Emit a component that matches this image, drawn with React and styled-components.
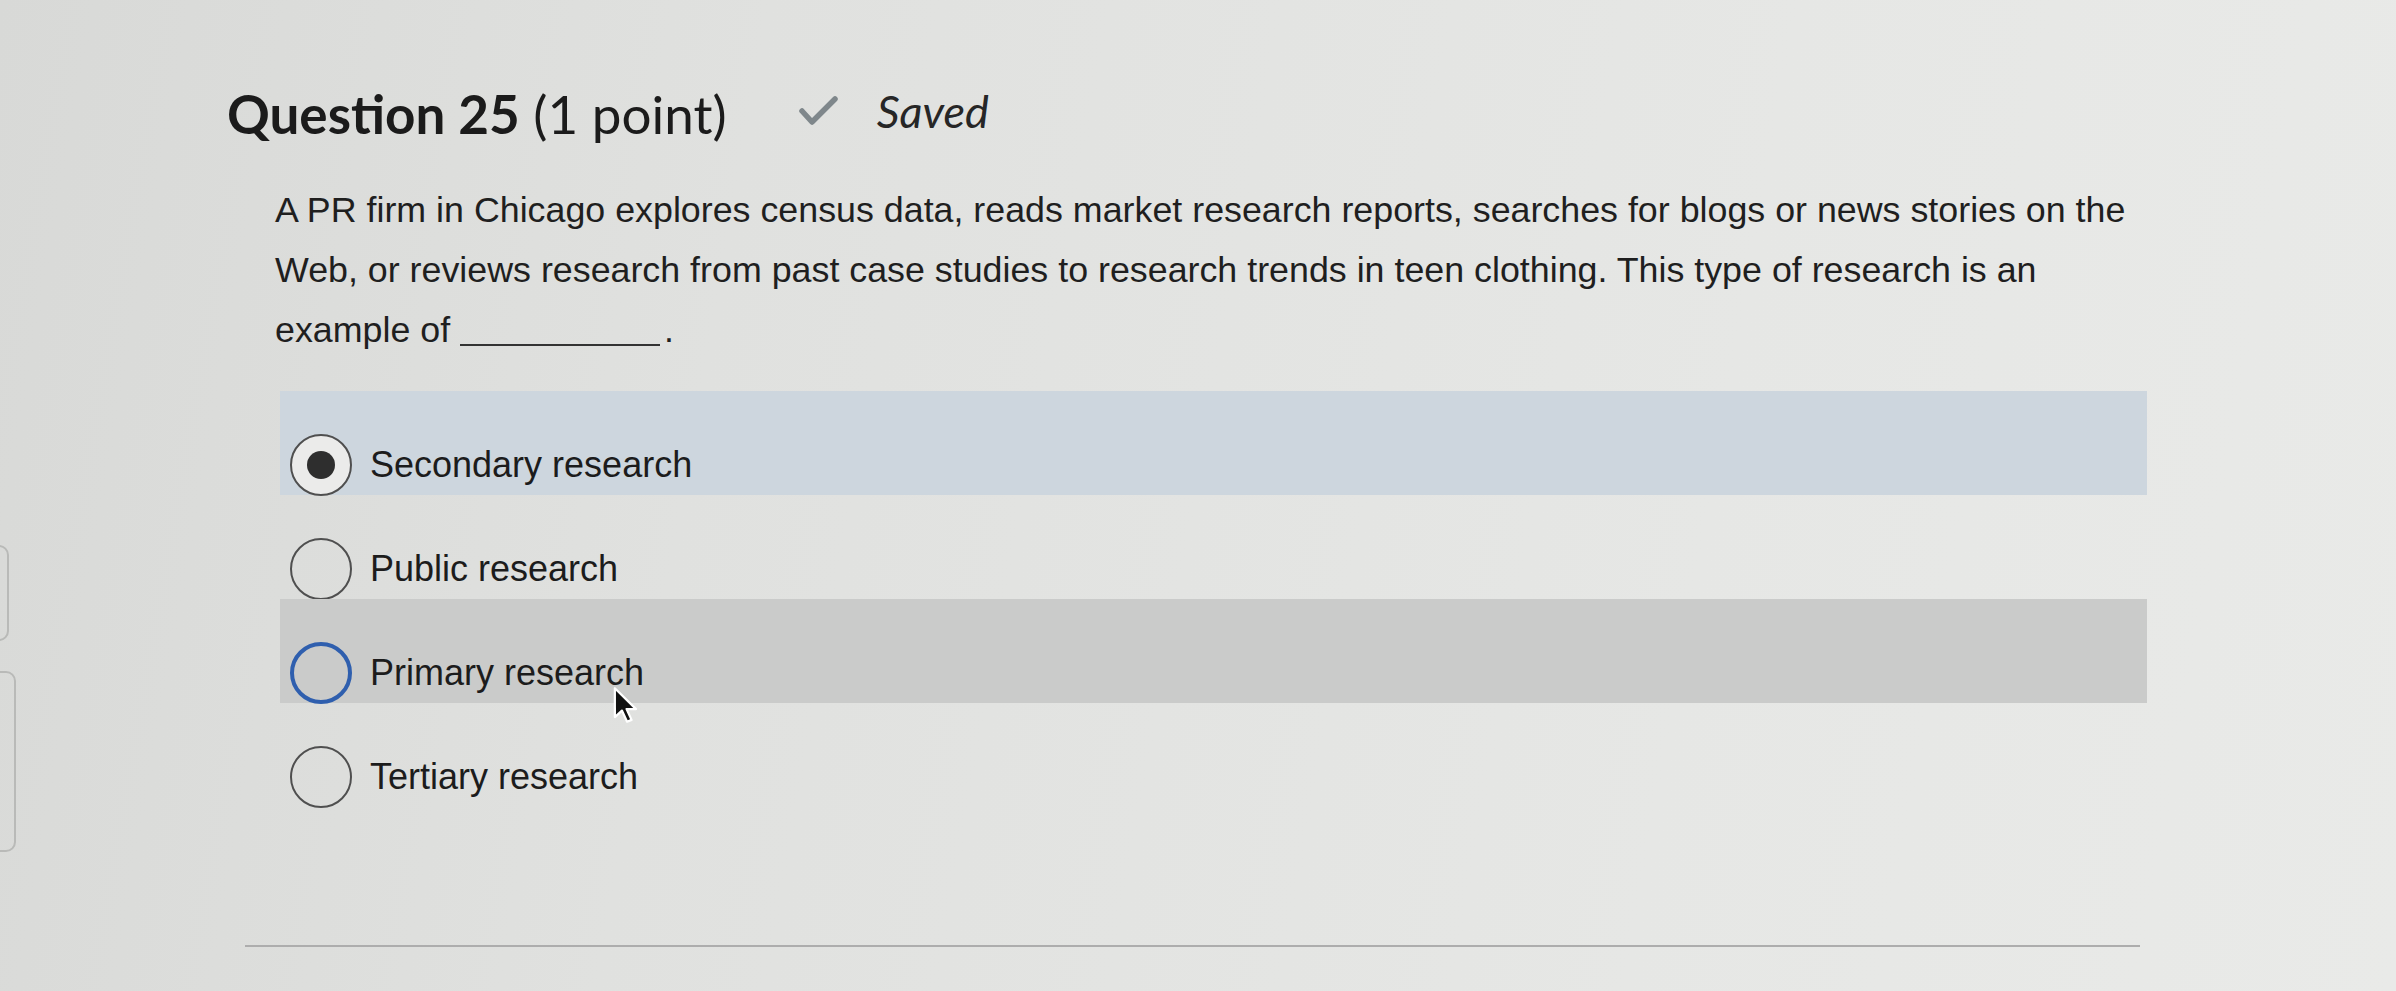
import styled, { createGlobalStyle } from "styled-components";

const GlobalStyle = createGlobalStyle`
  html, body {
    margin: 0;
    padding: 0;
  }
  body {
    background: #e3e4e2;
    font-family: "Liberation Sans", Arial, sans-serif;
    color: #222;
  }
`;

const Page = styled.div`
  display: flex;
  width: 2396px;
  height: 991px;
  overflow: hidden;
  background: linear-gradient(100deg, #d8d9d7 0%, #e0e1df 30%, #e6e7e5 70%, #e9eae8 100%);
`;

const EdgeRail = styled.div`
  display: flex;
  flex-direction: column;
  gap: 30px;
  width: 14px;
  flex-shrink: 0;
  padding-top: 545px;
`;

const EdgeTab = styled.div`
  margin-left: -20px;
  width: ${(p) => p.$w}px;
  height: ${(p) => p.$h}px;
  border: 2px solid #b9bab8;
  border-radius: 10px;
`;

const Main = styled.main`
  position: relative;
  flex: 1;
  padding: 84px 0 0 213px;
`;

const Header = styled.div`
  display: flex;
  align-items: center;
  height: 60px;
`;

const Title = styled.h1`
  margin: 0;
  font-family: Lato, "Open Sans", sans-serif;
  font-size: 53px;
  font-weight: 400;
  line-height: 60px;
  color: #1b1b1b;

  strong {
    font-weight: 700;
  }
`;

const SavedStatus = styled.span`
  display: flex;
  align-items: center;
  gap: 38px;
  margin-left: 72px;
  margin-top: -6px;
  font-family: Lato, "Open Sans", sans-serif;
  font-style: italic;
  font-size: 45px;
  color: #262626;
`;

const Prompt = styled.p`
  margin: 36px 0 0 48px;
  width: 1880px;
  font-size: 35.8px;
  line-height: 60px;
  color: #1f1f1f;
`;

const Blank = styled.span`
  display: inline-block;
  width: 200px;
  height: 2px;
  margin-right: 4px;
  background: #333;
  vertical-align: -4px;
`;

const Options = styled.div`
  display: flex;
  flex-direction: column;
  width: 1867px;
  margin: 31px 0 0 53px;
`;

const Option = styled.label`
  display: flex;
  align-items: center;
  gap: 18px;
  height: 104px;
  box-sizing: border-box;
  padding: 45px 0 1px 10px;
  background: ${(p) =>
    p.$tone === "selected" ? "#cdd6de" : p.$tone === "hover" ? "#cacbca" : "transparent"};
  cursor: pointer;
`;

const Radio = styled.span`
  display: flex;
  align-items: center;
  justify-content: center;
  width: 62px;
  height: 62px;
  box-sizing: border-box;
  flex-shrink: 0;
  border-radius: 50%;
  border: ${(p) => (p.$focus ? "4px solid #2f5fae" : "2px solid #4f4f4f")};
  background: ${(p) => (p.$checked ? "#ebebea" : "transparent")};

  &::after {
    content: "";
    display: ${(p) => (p.$checked ? "block" : "none")};
    width: 28px;
    height: 28px;
    border-radius: 50%;
    background: #2e2e2e;
  }
`;

const OptionText = styled.span`
  font-size: 36px;
  color: #1c1c1c;
`;

const Divider = styled.hr`
  margin: 138px 0 0 18px;
  width: 1895px;
  border: none;
  border-top: 2px solid #adadad;
`;

const Cursor = styled.svg`
  position: absolute;
  left: 599px;
  top: 686px;
  width: 26px;
  height: 38px;
`;

const options = [
  { label: "Secondary research", tone: "selected", checked: true },
  { label: "Public research" },
  { label: "Primary research", tone: "hover", focus: true },
  { label: "Tertiary research" },
];

function CheckIcon() {
  return (
    <svg width="40" height="32" viewBox="0 0 40 32">
      <polyline
        points="3,16 13,27 36,4"
        fill="none"
        stroke="#7f878b"
        strokeWidth="5.5"
        strokeLinecap="round"
        strokeLinejoin="round"
      />
    </svg>
  );
}

export default function App() {
  return (
    <>
      <GlobalStyle />
      <Page>
        <EdgeRail>
          <EdgeTab $w={25} $h={92} />
          <EdgeTab $w={32} $h={177} />
        </EdgeRail>
        <Main>
          <Header>
            <Title>
              <strong>Question 25</strong> (1 point)
            </Title>
            <SavedStatus>
              <CheckIcon />
              Saved
            </SavedStatus>
          </Header>
          <Prompt>
            A PR firm in Chicago explores census data, reads market research reports, searches for
            blogs or news stories on the Web, or reviews research from past case studies to research
            trends in teen clothing. This type of research is an example of <Blank />.
          </Prompt>
          <Options role="radiogroup">
            {options.map((o) => (
              <Option key={o.label} $tone={o.tone}>
                <Radio $checked={o.checked} $focus={o.focus} />
                <OptionText>{o.label}</OptionText>
              </Option>
            ))}
          </Options>
          <Divider />
          <Cursor viewBox="0 0 14 20">
            <path
              d="M1 1 L1 16.5 L4.8 13 L7.6 19 L10 18 L7.3 12.2 L12.4 12.2 Z"
              fill="#111"
              stroke="#fff"
              strokeWidth="1.2"
              strokeLinejoin="round"
            />
          </Cursor>
        </Main>
      </Page>
    </>
  );
}
